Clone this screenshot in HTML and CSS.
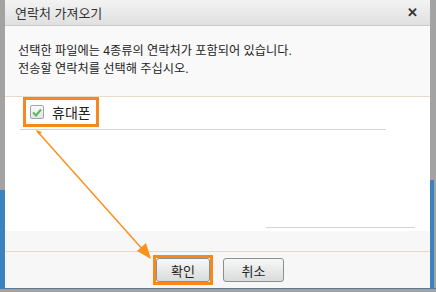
FILE: index.html
```html
<!DOCTYPE HTML>
<html>
<head>
  <meta charset="UTF-8">
  <title>연락처 가져오기</title>
  <link rel="stylesheet" href="styles.css">
</head>
<body>

  <div class="frame">
    <div class="dialog">
      <div class="title-bar">
        <span class="title">연락처 가져오기</span>
        <span class="close">&#x2715;</span>
      </div>

      <div class="message">
        <p>선택한 파일에는 4종류의 연락처가 포함되어 있습니다.</p>
        <p>전송할 연락처를 선택해 주십시오.</p>
      </div>

      <div class="list">
        <div class="item">
          <label class="mark">
            <span class="check">
              <svg width="10" height="9" viewBox="0 0 10 9"><path d="M1 4.5 L4 7.5 L9 1.5" fill="none" stroke="#5cb85c" stroke-width="2"/></svg>
            </span>
            <span>휴대폰</span>
          </label>
        </div>
        <div class="list-end"></div>
      </div>

      <div class="footer">
        <div class="footer-top"></div>
        <div class="buttons">
          <span class="mark-btn"><button class="btn">확인</button></span>
          <button class="btn">취소</button>
        </div>
      </div>
    </div>

    <svg class="arrow" width="436" height="292" viewBox="0 0 436 292">
      <line x1="37" y1="131" x2="144" y2="251" stroke="#f7931e" stroke-width="1.5"/>
      <polygon points="151,259 137,251 146,243" fill="#f7931e"/>
      <polygon points="36,130 42,132 39,135" fill="#f7931e"/>
    </svg>
  </div>

</body>
</html>
```

FILE: styles.css
```css
body {
  margin: 0;
  font-family: "Liberation Sans", "Noto Sans CJK KR", sans-serif;
  font-size: 12px;
  color: #222;
}
.frame {
  position: relative;
  width: 436px;
  height: 292px;
  box-sizing: border-box;
  padding: 0 6px 4px 5px;
  background:
    linear-gradient(#3d82c0, #3d82c0) left 0 top 190px / 5px 99px no-repeat,
    linear-gradient(#3d82c0, #3d82c0) right 2px top 180px / 4px 109px no-repeat,
    linear-gradient(#5a7a96, #5a7a96) left 0 top 288px / 436px 1px no-repeat,
    #a3a3a3;
}
.dialog {
  height: 288px;
  display: flex;
  flex-direction: column;
  background: #fff;
}
.title-bar {
  height: 25px;
  border-bottom: 1px solid #c9c9c9;
  background: linear-gradient(#f3f3f3, #e0e0e0);
  display: flex;
  align-items: center;
  justify-content: space-between;
  padding: 0 12px 0 10px;
}
.title {
  font-size: 13px;
  color: #333;
}
.close {
  font-size: 13px;
  font-weight: bold;
  color: #333;
}
.message {
  height: 71px;
  box-sizing: border-box;
  padding: 16px 13px 0;
  background: #f9f9f9;
  border-bottom: 1px solid #e6dccb;
  font-size: 12.2px;
}
.message p {
  margin: 0;
  line-height: 18px;
}
.list {
  height: 134px;
  display: flex;
  flex-direction: column;
  justify-content: space-between;
  background: #fff;
}
.item {
  margin: 0 44px 0 15px;
  height: 32px;
  border-bottom: 1px solid #d4d4d4;
}
.mark {
  display: inline-flex;
  align-items: center;
  gap: 8px;
  height: 30px;
  box-sizing: border-box;
  margin-left: 3px;
  padding: 0 5px 0 4px;
  border: 3px solid #f7891c;
  font-size: 14px;
}
.check {
  width: 14px;
  height: 14px;
  box-sizing: border-box;
  border: 1px solid #9aa6b2;
  border-radius: 2px;
  background: linear-gradient(#fafafa, #e4e4e4);
  display: flex;
  align-items: center;
  justify-content: center;
}
.list-end {
  margin: 0 15px 3px 261px;
  border-bottom: 1px solid #d4d4d4;
}
.footer {
  flex: 1;
  background: #f7f7f7;
}
.footer-top {
  height: 20px;
  border-bottom: 1px solid #e3d9c6;
}
.buttons {
  display: flex;
  align-items: center;
  gap: 10px;
  padding: 3px 0 0 148px;
}
.mark-btn {
  display: inline-block;
  padding: 0;
  border: 3px solid #f7891c;
  line-height: 0;
}
.btn {
  width: 56px;
  height: 24px;
  padding: 0;
  border: 1px solid #8e8e8e;
  border-radius: 3px;
  background: linear-gradient(#f7f7f7, #d9dcdc);
  font-family: "Liberation Sans", "Noto Sans CJK KR", sans-serif;
  font-size: 13px;
  color: #222;
}
.mark-btn .btn {
  width: 54px;
}
.buttons > .btn {
  width: 61px;
}
.arrow {
  position: absolute;
  left: 0;
  top: 0;
  pointer-events: none;
}
```
